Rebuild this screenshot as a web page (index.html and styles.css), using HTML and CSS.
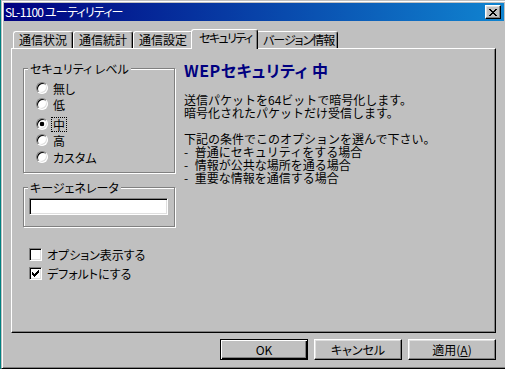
FILE: index.html
```html
<!DOCTYPE html>
<html lang="ja">
<head>
<meta charset="utf-8">
<title>SL-1100 ユーティリティー</title>
<link rel="stylesheet" href="styles.css">
</head>
<body>
<div class="window">
  <div class="titlebar">
    <span class="title">SL-1100 ユーティリティー</span>
    <span class="close"><svg width="8" height="7" viewBox="0 0 8 7" shape-rendering="crispEdges"><path d="M0 0h2v1h1v1h2v-1h1v-1h2v1h-1v1h-1v1h-1v1h1v1h1v1h1v1h-2v-1h-1v-1h-2v1h-1v1h-2v-1h1v-1h1v-1h1v-1h-1v-1h-1v-1h-1z"/></svg></span>
  </div>
  <div class="dialog">
    <div class="tabs">
      <div class="tab">通信状況</div>
      <div class="tab">通信統計</div>
      <div class="tab">通信設定</div>
      <div class="tab tab-active">セキュリティ</div>
      <div class="tab tab-wide">バージョン情報</div>
    </div>
    <div class="panel">
      <div class="left">
        <fieldset class="group group-level">
          <legend>セキュリティ レベル</legend>
          <div class="opt"><span class="radio"></span><span>無し</span></div>
          <div class="opt"><span class="radio"></span><span>低</span></div>
          <div class="opt opt-mid"><span class="radio radio-on"></span><span class="focus">中</span></div>
          <div class="opt"><span class="radio"></span><span>高</span></div>
          <div class="opt opt-last"><span class="radio"></span><span>カスタム</span></div>
        </fieldset>
        <fieldset class="group group-key">
          <legend>キージェネレータ</legend>
          <div class="textbox"></div>
        </fieldset>
        <div class="checks">
          <div class="check-row"><span class="checkbox"></span><span>オプション表示する</span></div>
          <div class="check-row"><span class="checkbox"><svg width="7" height="7" viewBox="0 0 7 7" shape-rendering="crispEdges"><path d="M6 0h1v3h-1v1h-1v1h-1v1h-1v1h-1v-1h-1v-1h-1v-3h1v1h1v1h1v-1h1v-1h1v-1h1z"/></svg></span><span>デフォルトにする</span></div>
        </div>
      </div>
      <div class="info">
        <h1 class="info-title">WEPセキュリティ 中</h1>
        <p class="info-text">送信パケットを64ビットで暗号化します。<br>暗号化されたパケットだけ受信します。</p>
        <p class="info-text">下記の条件でこのオプションを選んで下さい。<br>- 普通にセキュリティをする場合<br>- 情報が公共な場所を通る場合<br>- 重要な情報を通信する場合</p>
      </div>
    </div>
    <div class="buttons">
      <div class="btn btn-default">OK</div>
      <div class="btn">キャンセル</div>
      <div class="btn">適用(<u>A</u>)</div>
    </div>
  </div>
</div>
</body>
</html>
```
FILE: styles.css
```css
html, body {
  margin: 0;
  padding: 0;
}
body {
  background: #008080;
  overflow: hidden;
  font-family: "Noto Sans CJK JP", "Noto Sans", sans-serif;
  font-size: 12px;
  color: #000;
}
.window {
  box-sizing: border-box;
  margin-left: 1px;
  width: 506px;
  height: 369px;
  background: #c0c0c0;
  border: 1px solid;
  border-color: #c0c0c0 #000 #000 #c0c0c0;
  box-shadow: inset 1px 1px 0 #fff, inset -1px -1px 0 #808080;
  padding: 2px;
  display: flex;
  flex-direction: column;
}
.titlebar {
  height: 18px;
  flex: none;
  display: flex;
  align-items: center;
  justify-content: space-between;
  padding: 0 3px 0 1px;
  background: linear-gradient(90deg, #000080, #1084d0);
  color: #fff;
  font-feature-settings: "palt";
}
.title {
  line-height: 14px;
  white-space: nowrap;
  letter-spacing: -0.8px;
}
.close {
  box-sizing: border-box;
  width: 16px;
  height: 14px;
  background: #c0c0c0;
  border: 1px solid;
  border-color: #fff #000 #000 #fff;
  box-shadow: inset -1px -1px 0 #808080, inset 1px 1px 0 #dfdfdf;
  display: flex;
  align-items: center;
  justify-content: center;
  padding-right: 1px;
}
.close svg { display: block; fill: #000; }
.dialog {
  flex: 1;
  display: flex;
  flex-direction: column;
  padding: 0 8px 0 7px;
}
.tabs {
  margin-top: 8px;
  height: 19px;
  flex: none;
  display: flex;
  align-items: flex-end;
  padding-left: 2px;
  position: relative;
  z-index: 1;
  font-feature-settings: "palt";
}
.tab {
  box-sizing: border-box;
  width: 60px;
  height: 17px;
  padding-left: 5px;
  line-height: 15px;
  white-space: nowrap;
  overflow: hidden;
  border: 1px solid;
  border-bottom: 0;
  border-color: #fff #000 #000 #fff;
  border-radius: 3px 3px 0 0;
  box-shadow: inset -1px 0 0 #808080;
  background: #c0c0c0;
}
.tab-active {
  width: 67px;
  height: 20px;
  margin: 0 -2px -1px -2px;
  padding-left: 7px;
  letter-spacing: -1.6px;
  position: relative;
  z-index: 2;
}
.tab-wide {
  width: 82px;
  padding-left: 6px;
  letter-spacing: -1px;
}
.panel {
  box-sizing: border-box;
  height: 285px;
  flex: none;
  border: 1px solid;
  border-color: #fff #000 #000 #fff;
  box-shadow: inset -1px -1px 0 #808080;
  display: flex;
  padding: 11px 0 0 11px;
}
.left {
  width: 152px;
  flex: none;
  display: flex;
  flex-direction: column;
  font-feature-settings: "palt";
}
.group {
  margin: 0;
  min-width: 0;
  border: 1px solid #808080;
  box-shadow: 1px 1px 0 #fff, inset 1px 1px 0 #fff;
}
.group legend {
  padding: 0 2px;
  margin-left: 4px;
  line-height: 13px;
  background: #c0c0c0;
}
.group-level {
  margin-top: 2px;
  padding: 5px 0 7px 0;
}
.opt {
  height: 16px;
  display: flex;
  align-items: center;
  gap: 5px;
  padding-left: 12px;
}
.opt-mid { margin-top: 4px; }
.opt-last { margin-top: 1px; }
.radio {
  box-sizing: border-box;
  width: 12px;
  height: 12px;
  flex: none;
  border-radius: 50%;
  background: #fff;
  border: 1px solid;
  border-color: #808080 #fff #fff #808080;
  box-shadow: inset 1px 1px 0 #000, inset -1px -1px 0 #dfdfdf;
}
.radio-on {
  background: radial-gradient(circle, #000 0 2px, #fff 2.6px);
}
.focus {
  outline: 1px dotted #000;
  outline-offset: 0;
  line-height: 13px;
  padding: 0 1px;
  margin-left: -1px;
}
.group-key {
  margin-top: 8px;
  padding: 4px 0 11px 0;
}
.textbox {
  box-sizing: border-box;
  height: 17px;
  width: 139px;
  margin-left: 5px;
  background: #fff;
  border: 1px solid;
  border-color: #808080 #fff #fff #808080;
  box-shadow: inset 1px 1px 0 #000, inset -1px -1px 0 #dfdfdf;
}
.checks {
  margin-top: 18px;
  padding-left: 6px;
}
.check-row {
  height: 19px;
  display: flex;
  align-items: center;
  gap: 5px;
}
.checkbox {
  box-sizing: border-box;
  width: 13px;
  height: 13px;
  flex: none;
  background: #fff;
  border: 1px solid;
  border-color: #808080 #fff #fff #808080;
  box-shadow: inset 1px 1px 0 #000, inset -1px -1px 0 #dfdfdf;
  display: flex;
  align-items: center;
  justify-content: center;
}
.checkbox svg { display: block; fill: #000; }
.info {
  margin-left: 9px;
}
.info-title {
  margin: 0;
  font-size: 16px;
  line-height: 20px;
  font-weight: bold;
  color: #000080;
  letter-spacing: 0.5px;
  font-feature-settings: "palt";
}
.info-text {
  margin: 13px 0 0;
  line-height: 13px;
  white-space: nowrap;
  word-spacing: 4px;
}
.buttons {
  margin-top: 6px;
  display: flex;
  justify-content: flex-end;
  gap: 6px;
  font-feature-settings: "palt";
}
.btn {
  box-sizing: border-box;
  width: 88px;
  height: 21px;
  border: 1px solid;
  border-color: #fff #000 #000 #fff;
  box-shadow: inset -1px -1px 0 #808080, inset 1px 1px 0 #dfdfdf;
  display: flex;
  align-items: center;
  justify-content: center;
  line-height: 14px;
}
.btn-default {
  border-color: #000;
  box-shadow: inset 1px 1px 0 #fff, inset -1px -1px 0 #000, inset -2px -2px 0 #808080;
}
```
